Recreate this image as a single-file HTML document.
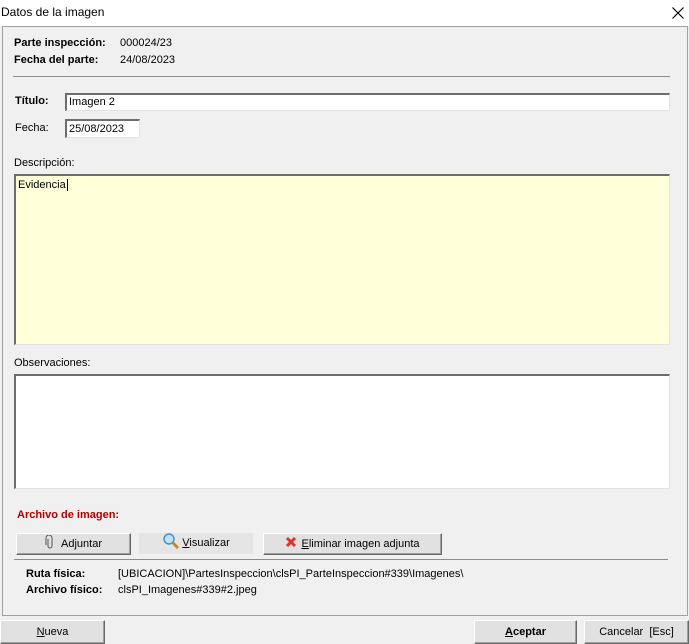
<!DOCTYPE html>
<html><head><meta charset="utf-8"><style>
*{box-sizing:border-box;margin:0;padding:0}
body{width:689px;height:643px;background:#f0f0f0;font-family:"Liberation Sans",Arial,sans-serif;font-size:11px;color:#000;position:relative;overflow:hidden}
.a{position:absolute;white-space:nowrap}
.b{font-weight:bold}
.in{position:absolute;background:#fff;border-top:2px solid #6d6d6d;border-left:2px solid #6d6d6d;border-bottom:1px solid #e3e3e3;border-right:1px solid #e3e3e3;padding:0 2px;line-height:14px}
.btn{position:absolute;background:#e1e1e1;border:1px solid #fff;border-right-color:#696969;border-bottom-color:#696969;box-shadow:inset -1px -1px 0 #a0a0a0;text-align:center;line-height:20px}
</style></head><body>
<div style="position:absolute;left:0;top:0;width:689px;height:26px;background:#fff"></div>
<div class="a" style="left:1px;top:5px;font-size:12px">Datos de la imagen</div>
<svg class="a" style="left:671px;top:6px" width="14" height="14"><path d="M1.5 1.5L12.5 12.5M12.5 1.5L1.5 12.5" stroke="#000" stroke-width="1.2"/></svg>
<div style="position:absolute;left:2px;top:26px;width:686px;height:590px;border:1px solid #a0a0a0"></div>
<div class="a b" style="left:14px;top:37px">Parte inspección:</div>
<div class="a" style="left:120px;top:37px">000024/23</div>
<div class="a b" style="left:14px;top:54px">Fecha del parte:</div>
<div class="a" style="left:120px;top:54px">24/08/2023</div>
<div class="a" style="left:13px;top:76px;width:657px;height:1px;background:#8c8c8c"></div>
<div class="a b" style="left:15px;top:95px">Título:</div>
<div class="in" style="left:65px;top:93px;width:605px;height:18px">Imagen 2</div>
<div class="a" style="left:15px;top:122px">Fecha:</div>
<div class="in" style="left:65px;top:119px;width:75px;height:19px;line-height:16px">25/08/2023</div>
<div class="a" style="left:14px;top:157px">Descripción:</div>
<div class="in" style="left:14px;top:174px;width:656px;height:171px;background:#ffffd9;padding-top:2px">Evidencia<span style="border-left:1px solid #000;margin-left:1px"></span></div>
<div class="a" style="left:14px;top:357px">Observaciones:</div>
<div class="in" style="left:14px;top:374px;width:656px;height:115px"></div>
<div class="a b" style="left:17px;top:509px;color:#b00000">Archivo de imagen:</div>
<div class="btn" style="left:16px;top:533px;width:115px;height:22px"><svg width="10" height="14" style="vertical-align:-2px;margin-right:6px"><path d="M3 4V11a2 2 0 0 0 4 0V3a3 3 0 0 0-6 0V10" fill="none" stroke="#555" stroke-width="1"/></svg>Ad<u>j</u>untar</div>
<div class="a" style="left:139px;top:533px;width:114px;height:21px;background:#e5e5e5;text-align:center;line-height:20px"><svg width="18" height="16" style="vertical-align:-3px;margin-right:2px"><circle cx="7" cy="6" r="5" fill="#bfe3f7" stroke="#3b8fd0" stroke-width="1.4"/><path d="M10.5 9.5L16 15" stroke="#c28a2c" stroke-width="3"/></svg><u>V</u>isualizar</div>
<div class="btn" style="left:263px;top:533px;width:179px;height:22px"><svg width="12" height="12" style="vertical-align:-1px;margin-right:4px"><path d="M2 2L10 10M10 2L2 10" stroke="#e0302a" stroke-width="3"/></svg><u>E</u>liminar imagen adjunta</div>
<div class="a" style="left:14px;top:559px;width:654px;height:1px;background:#8c8c8c"></div>
<div class="a b" style="left:26px;top:568px">Ruta física:</div>
<div class="a" style="left:118px;top:568px">[UBICACION]\PartesInspeccion\clsPI_ParteInspeccion#339\Imagenes\</div>
<div class="a b" style="left:26px;top:584px">Archivo físico:</div>
<div class="a" style="left:118px;top:584px">clsPI_Imagenes#339#2.jpeg</div>
<div class="btn" style="left:0;top:620px;width:105px;height:24px;line-height:22px"><u>N</u>ueva</div>
<div class="btn b" style="left:474px;top:620px;width:103px;height:24px;line-height:22px"><u>A</u>ceptar</div>
<div class="btn" style="left:584px;top:620px;width:105px;height:24px;line-height:22px">Cancelar &nbsp;[Esc]</div>
</body></html>
